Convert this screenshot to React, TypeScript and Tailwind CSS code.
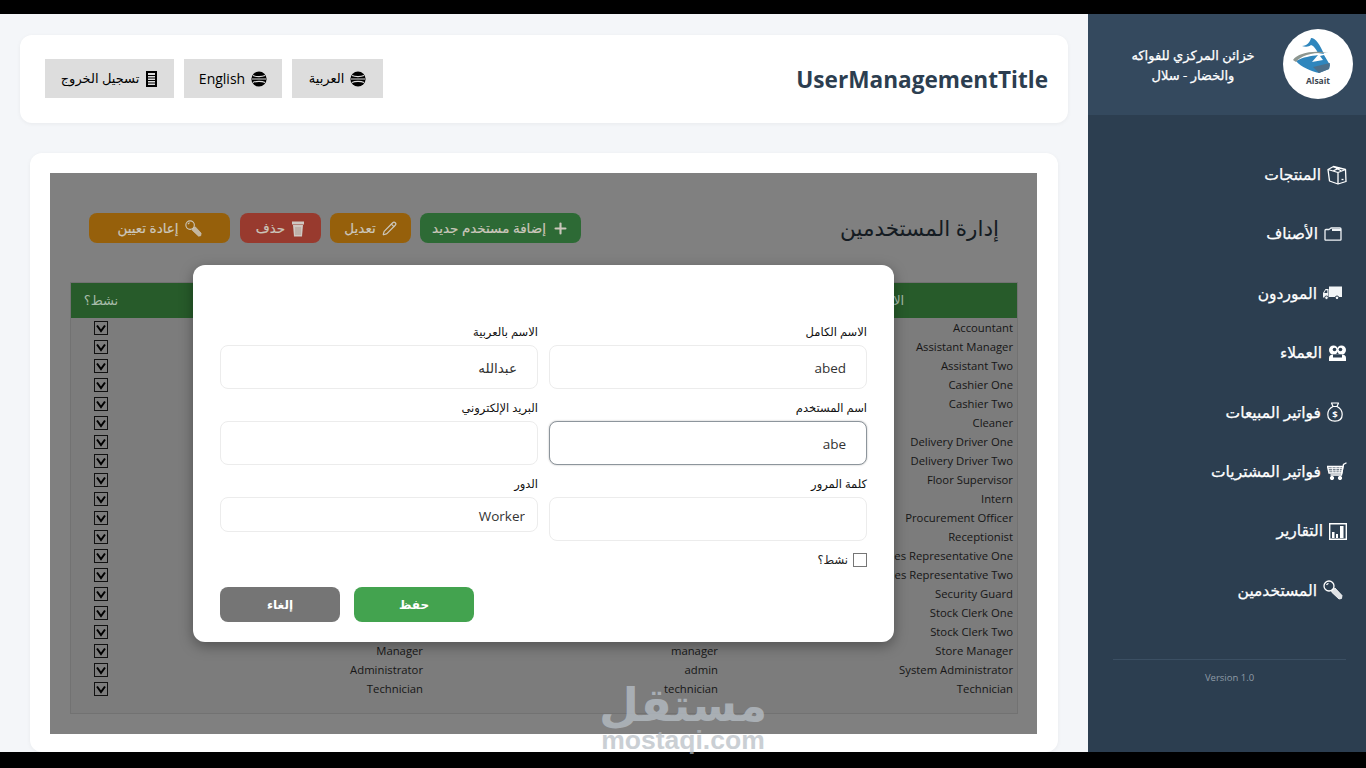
import React from 'react';
import { Plus, Pencil } from 'lucide-react';

const font = "font-['Open_Sans','DejaVu_Sans',sans-serif]";

const roles = [
  'Accountant',
  'Assistant Manager',
  'Assistant Two',
  'Cashier One',
  'Cashier Two',
  'Cleaner',
  'Delivery Driver One',
  'Delivery Driver Two',
  'Floor Supervisor',
  'Intern',
  'Procurement Officer',
  'Receptionist',
  'Sales Representative One',
  'Sales Representative Two',
  'Security Guard',
  'Stock Clerk One',
  'Stock Clerk Two',
  'Store Manager',
  'System Administrator',
  'Technician',
];

// only the last rows show from under the modal
const visibleNames: Record<string, string[]> = {
  'Store Manager': ['Manager', 'manager'],
  'System Administrator': ['Administrator', 'admin'],
  Technician: ['Technician', 'technician'],
};

function GlobeIcon() {
  return (
    <svg width="16" height="16" viewBox="0 0 16 16" className="shrink-0">
      <circle cx="8" cy="8" r="7.6" fill="#000" />
      <path d="M2 4.6C5 6 11 6 14 4.6M1 8h14M2 11.4C5 10 11 10 14 11.4" stroke="#ddd" strokeWidth="1.1" fill="none" />
    </svg>
  );
}

function LogoutIcon() {
  return (
    <svg width="13" height="16" viewBox="0 0 13 16" className="shrink-0">
      <path d="M1 0h11v16H1z" fill="#000" />
      <path d="M3 2h7v12H3z" fill="#ddd" />
      <path d="M3 4.5h7M3 7h7M3 9.5h7M3 12h7" stroke="#000" strokeWidth="1" />
    </svg>
  );
}

function BoxIcon() {
  return (
    <svg width="20" height="20" viewBox="0 0 20 20" fill="none" stroke="#fff" strokeWidth="1.3" strokeLinejoin="round">
      <path d="M6.5 1.5 18.5 4.5 19 16.5 11 19 2.5 16 1 4.5z" />
      <path d="M1 4.5 11 7.5 18.5 4.5M11 7.5V19M6.5 1.5 14 5.7M12.5 2.8 6 6" />
      <path d="M14.5 14.5h2" />
    </svg>
  );
}

function FolderIcon() {
  return (
    <svg width="18" height="14" viewBox="0 0 18 14" fill="none" stroke="#eef2f5" strokeWidth="1.3" strokeLinejoin="round">
      <path d="M1 3.5c0-.7.4-1 1-1h3L7 1h9c.6 0 1 .4 1 1v10.5c0 .4-.3.7-.7.7H1.7c-.4 0-.7-.3-.7-.7z" />
      <path d="M8 3h9" strokeWidth="2" />
    </svg>
  );
}

function TruckIcon() {
  return (
    <svg width="19" height="14" viewBox="0 0 19 14">
      <path d="M6 0.5h13v10.5H6z" fill="#f2f5f7" />
      <path d="M5.5 3H2.5L0 7v4.5h5.5z" fill="#f2f5f7" />
      <path d="M2.6 4.2h1.7V7H1.2z" fill="#2c3e50" />
      <circle cx="3.5" cy="11.8" r="1.8" fill="#f2f5f7" stroke="#2c3e50" />
      <circle cx="14" cy="11.8" r="1.8" fill="#f2f5f7" stroke="#2c3e50" />
    </svg>
  );
}

function PeopleIcon() {
  return (
    <svg width="19" height="16" viewBox="0 0 19 16">
      <circle cx="5.5" cy="5" r="4.5" fill="#fff" />
      <circle cx="13.5" cy="5" r="4.5" fill="#fff" />
      <path d="M1 16v-3c0-2 1.5-3.5 4-3.5h9c2.5 0 4 1.5 4 3.5v3z" fill="#fff" />
      <circle cx="6.5" cy="4.5" r="1.8" fill="#2c3e50" />
      <circle cx="12.5" cy="4.5" r="1.8" fill="#2c3e50" />
      <path d="M5 9.5h9v3H5z" fill="#2c3e50" />
    </svg>
  );
}

function BagIcon() {
  return (
    <svg width="16" height="20" viewBox="0 0 16 20" fill="none" stroke="#fff" strokeWidth="1.2">
      <path d="M4.5 1h7L10 4.5H6z" strokeLinejoin="round" />
      <path d="M6 4.5C3 6 .8 8.5.8 12.5.8 17 4 19.2 8 19.2s7.2-2.200 7.2-6.700c0-4-2.200-6.500-5.200-8" />
      <text x="8" y="15.500" textAnchor="middle" fontSize="9.500" fontWeight="700" fill="#fff" stroke="none" fontFamily="Open Sans">$</text>
    </svg>
  );
}

function CartIcon() {
  return (
    <svg width="20" height="19" viewBox="0 0 20 19" fill="none" stroke="#fff">
      <path d="M19.500 .8 16.500 2.500 14.500 13H3.500" strokeWidth="1.300" />
      <path d="M.5 4.500H16L14.800 11H2z" fill="#fff" fillOpacity=".35" strokeWidth="1.300" />
      <path d="M1 6.500h14.500M1.500 8.800h13.500M5 4.500 6 11M9 4.500V11M13 4.500 12 11" strokeWidth=".8" />
      <circle cx="5" cy="16" r="1.700" fill="#fff" />
      <circle cx="13" cy="16" r="1.700" fill="#fff" />
    </svg>
  );
}

function ChartIcon() {
  return (
    <svg width="18" height="17" viewBox="0 0 18 17">
      <path d="M.7.7h16.600v15.600H.7z" fill="none" stroke="#fff" strokeWidth="1.400" />
      <path d="M3 9h2.500v6H3zM7 11h2v4H7zM11 3h3.500v12H11z" fill="#fff" />
    </svg>
  );
}

function KeyIcon({ size = 20, color = '#fff' }: { size?: number; color?: string }) {
  return (
    <svg width={size} height={size} viewBox="0 0 20 20" fill="none" stroke={color} className="shrink-0">
      <circle cx="6" cy="6" r="5" strokeWidth="1.300" />
      <path d="M9.500 9.500 12 8l7 7.500-.5 3-2.500.5-7.500-7z" fill={color} fillOpacity=".85" strokeWidth=".8" strokeLinejoin="round" />
      <path d="M3.500 5c.5-1 1-1.500 2-1.700" strokeWidth="1.200" />
    </svg>
  );
}

function TrashIcon() {
  return (
    <svg width="14" height="17" viewBox="0 0 14 17" className="shrink-0">
      <path d="M1 1.500h12v3H1z" fill="#cfc8c2" />
      <path d="M2 5h10l-1 11.500H3z" fill="#cfc8c2" />
      <path d="M5 7v8M7 7v8M9 7v8" stroke="#a68f86" strokeWidth=".8" />
    </svg>
  );
}

function CheckMark() {
  return (
    <span className="flex h-[14px] w-[14px] items-center justify-center border border-[#111] bg-[#7d7d7d]">
      <svg width="10" height="10" viewBox="0 0 10 10" fill="none" stroke="#000" strokeWidth="2">
        <path d="M1 2.500 5 8 9 2.500" />
      </svg>
    </span>
  );
}

function Logo() {
  return (
    <svg width="70" height="70" viewBox="0 0 70 70" className="shrink-0">
      <circle cx="35" cy="35" r="35" fill="#fff" />
      <path d="M19 17C24 17 27 13 28 9 33 9 37 16 41 25L35 24C33 20 31 17 28 16 26 18 22 18 19 17z" fill="#2f86bd" />
      <path d="M13 32C20 28 28 27 35 26L29 33 40 31 37 27 41 26 47 36 46 40 36 44C28 42 18 38 13 32z" fill="#2f86bd" />
      <path d="M30 38 47 34 46 40 36 44z" fill="#4c6f8a" />
      <path d="M10 31C15 24 30 21 46 24 32 23 18 26 13 33z" fill="#8d9690" />
      <text x="35" y="55" textAnchor="middle" fontSize="8.500" fontWeight="700" fill="#3c4650" fontFamily="Open Sans">Alsait</text>
    </svg>
  );
}

const navItems = [
  { label: 'المنتجات', icon: <BoxIcon />, pad: 'pr-[19px]' },
  { label: 'الأصناف', icon: <FolderIcon />, pad: 'pr-[24px]' },
  { label: 'الموردون', icon: <TruckIcon />, pad: 'pr-[24px]' },
  { label: 'العملاء', icon: <PeopleIcon />, pad: 'pr-[19px]' },
  { label: 'فواتير المبيعات', icon: <BagIcon />, pad: 'pr-[23px]' },
  { label: 'فواتير المشتريات', icon: <CartIcon />, pad: 'pr-[19px]' },
  { label: 'التقارير', icon: <ChartIcon />, pad: 'pr-[19px]' },
  { label: 'المستخدمين', icon: <KeyIcon />, pad: 'pr-[23px]' },
];

function Field({ label, value, focused, short, pad = 'pr-[20px]' }: { label: string; value?: string; focused?: boolean; short?: boolean; pad?: string }) {
  return (
    <div className="flex flex-col">
      <label className="mb-[4px] h-[18px] text-[11.5px] leading-[18px] text-[#111]">{label}</label>
      <input
        readOnly
        value={value ?? ''}
        className={`w-full rounded-lg border bg-white pt-[2px] text-right text-[13.5px] text-[#333] outline-none ${pad} ${short ? 'h-[35px]' : 'h-[44px]'} ${
          focused ? 'border-[#8d959c] shadow-[0_0_2px_rgba(0,0,0,0.3)]' : 'border-[#ececec]'
        }`}
      />
    </div>
  );
}

function ActionButton({ className, children }: { className: string; children: React.ReactNode }) {
  return (
    <button type="button" className={`flex h-[30px] items-center justify-center gap-[6px] rounded-lg text-[13.5px] text-[#cbc6bb] [-webkit-text-stroke:0.2px_#cbc6bb] ${className}`}>
      {children}
    </button>
  );
}

export default function App() {
  return (
    <div className={`relative flex h-screen w-full flex-col overflow-hidden bg-black ${font}`}>
      <div className="h-[14px] shrink-0 bg-black" />
      <div className="flex min-h-0 flex-1">
        <main className="flex min-w-0 flex-1 flex-col bg-[#f4f6f9]">
          <header dir="rtl" className="mx-[20px] mt-[21px] flex h-[88px] shrink-0 items-center justify-between rounded-xl bg-white pl-[25px] pr-[20px] shadow-[0_1px_4px_rgba(0,0,0,0.05)]">
            <h1 dir="ltr" className="mt-[2px] text-[22.6px] font-bold text-[#2c3e50]">UserManagementTitle</h1>
            <div className="mb-[1px] flex items-center gap-[10px]">
              <button type="button" className="flex h-[39px] w-[91px] items-center justify-center gap-[6px] bg-[#dddddd] text-[13px] text-black">
                <GlobeIcon />
                <span>العربية</span>
              </button>
              <button type="button" className="flex h-[39px] w-[98px] items-center justify-center gap-[6px] bg-[#dddddd] text-[14px] text-black">
                <GlobeIcon />
                <span>English</span>
              </button>
              <button type="button" className="flex h-[39px] w-[129px] items-center justify-center gap-[6px] bg-[#dddddd] text-[13px] text-black">
                <LogoutIcon />
                <span>تسجيل الخروج</span>
              </button>
            </div>
          </header>

          <section className="mx-[30px] mt-[30px] min-h-0 flex-1 rounded-xl bg-white pb-[18px] pl-[20px] pr-[21px] pt-[20px] shadow-[0_1px_4px_rgba(0,0,0,0.05)]">
            <div className="relative flex h-full flex-col bg-[#808080] pb-[21px] pl-[21px] pr-[20px] pt-[40px]">
              <div dir="rtl" className="flex h-[30px] shrink-0 items-center justify-between px-[18px]">
                <h2 className="text-[21.5px] text-[#141b22]">إدارة المستخدمين</h2>
                <div className="flex items-center gap-[9px]">
                  <ActionButton className="w-[161px] bg-[#2d6a35]">
                    <Plus size={17} strokeWidth={3} />
                    <span>إضافة مستخدم جديد</span>
                  </ActionButton>
                  <ActionButton className="w-[81px] bg-[#96600b]">
                    <Pencil size={15} />
                    <span>تعديل</span>
                  </ActionButton>
                  <ActionButton className="w-[81px] bg-[#983a2e]">
                    <TrashIcon />
                    <span>حذف</span>
                  </ActionButton>
                  <ActionButton className="mr-px w-[141px] bg-[#96600b]">
                    <KeyIcon size={17} color="#cbc6bb" />
                    <span>إعادة تعيين</span>
                  </ActionButton>
                </div>
              </div>

              <div className="mt-[40px] min-h-0 flex-1 bg-[#7c7c7c] ring-1 ring-[#727272]">
                <div className="grid h-[35px] grid-cols-[60px_296px_295px_295px] items-center bg-[#275b2a] text-center text-[13px] text-[#a8bba9]">
                  <span dir="rtl">نشط؟</span>
                  <span />
                  <span />
                  <span dir="rtl">الاسم الكامل</span>
                </div>
                <div>
                  {roles.map((role) => {
                    const names = visibleNames[role];
                    return (
                      <div key={role} className="grid h-[19px] grid-cols-[60px_296px_295px_295px] items-center text-right text-[11.3px] text-[#161616]">
                        <span className="flex justify-center"><CheckMark /></span>
                        <span className="pr-[4px] pt-[2px]">{names?.[0]}</span>
                        <span className="pr-[4px] pt-[2px]">{names?.[1]}</span>
                        <span className="pr-[4px] pt-[2px]">{role}</span>
                      </div>
                    );
                  })}
                </div>
              </div>

              <div dir="rtl" className="absolute left-[143px] top-[92px] h-[377px] w-[701px] rounded-xl bg-white px-[27px] pt-[58px] shadow-[0_4px_14px_rgba(0,0,0,0.35)]">
                <div className="grid grid-cols-[318px_318px] gap-x-[11px] gap-y-[10px]">
                  <Field label="الاسم الكامل" value="abed" />
                  <Field label="الاسم بالعربية" value="عبدالله" />
                  <Field label="اسم المستخدم" value="abe" focused />
                  <Field label="البريد الإلكتروني" />
                  <Field label="كلمة المرور" />
                  <Field label="الدور" value="Worker" short pad="pr-[12px]" />
                </div>
                <div className="mt-[12px] flex h-[14px] items-center gap-[5px]">
                  <span className="h-[14px] w-[14px] border border-[#767676] bg-white" />
                  <span className="text-[11.5px] text-[#222]">نشط؟</span>
                </div>
                <div className="mt-[20px] flex justify-end gap-[14px]">
                  <button type="button" className="h-[35px] w-[120px] rounded-lg bg-[#43a34f] text-[12px] font-bold text-white">حفظ</button>
                  <button type="button" className="h-[35px] w-[120px] rounded-lg bg-[#757575] text-[12px] font-bold text-white">إلغاء</button>
                </div>
              </div>
            </div>
          </section>
        </main>

        <aside dir="rtl" className="flex w-[278px] shrink-0 flex-col bg-[#2c3e50] text-white">
          <div className="flex h-[101px] shrink-0 items-center gap-[15px] bg-[#34495e] pb-[2px] pr-[13px]">
            <Logo />
            <p className="mt-[3px] w-[150px] text-center text-[13px] leading-[20px] [-webkit-text-stroke:0.25px_white]">خزائن المركزي للفواكه والخضار - سلال</p>
          </div>
          <nav className="pt-[30px]">
            {navItems.map((item) => (
              <a key={item.label} className={`flex h-[59.4px] items-center gap-[6px] text-[15.5px] [-webkit-text-stroke:0.25px_white] ${item.pad}`}>
                {item.icon}
                <span>{item.label}</span>
              </a>
            ))}
          </nav>
          <div className="ml-[25px] mr-[20px] mt-[39px] border-t border-[#3b4f63] pt-[11px] text-center text-[9.5px] text-[#8f9ba6]">
            <span dir="ltr">Version 1.0</span>
          </div>
        </aside>
      </div>
      <div className="h-[16px] shrink-0 bg-black" />

      <div className="pointer-events-none absolute left-[600px] top-[673px] flex w-[166px] flex-col items-center text-[#b4bbc2]">
        <span dir="rtl" className="-mb-[6px] text-[46px] font-bold leading-[60px] opacity-80">مستقل</span>
        <span className="font-['Liberation_Sans',sans-serif] text-[26.5px] font-bold leading-[26px] opacity-70">mostaqi.com</span>
      </div>
    </div>
  );
}
